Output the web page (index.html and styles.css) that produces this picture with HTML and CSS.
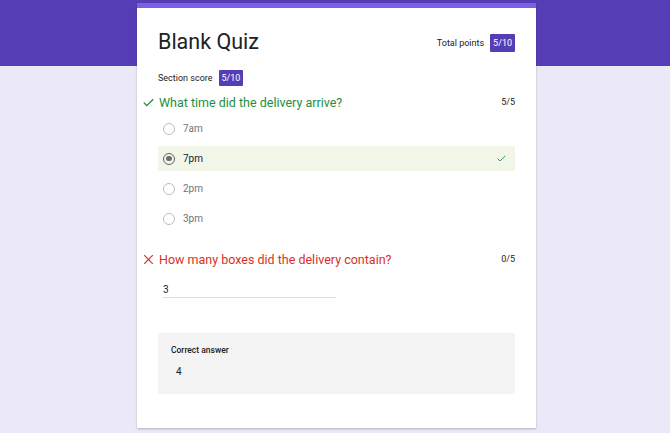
FILE: index.html
```html
<!DOCTYPE html>
<html>
<head>
<meta charset="utf-8">
<link rel="stylesheet" href="styles.css">
</head>
<body>
<div class="band"></div>
<div class="page">
  <div class="card">
    <div class="stripe"></div>
    <div class="inner">
      <div class="head">
        <h1 class="title">Blank Quiz</h1>
        <div class="total">Total points <span class="badge big">5/10</span></div>
      </div>
      <div class="section">Section score <span class="badge">5/10</span></div>

      <div class="q">
        <div class="qhead">
          <svg class="mark" width="11" height="9" viewBox="0 0 11 9"><path d="M0.8 4.6 L3.8 7.6 L10.2 1.2" fill="none" stroke="#1e8e3e" stroke-width="1.3"/></svg>
          <span class="qtext ok">What time did the delivery arrive?</span>
          <span class="pts">5/5</span>
        </div>
        <div class="opts">
          <div class="opt"><span class="radio"></span><span class="otext">7am</span></div>
          <div class="opt sel"><span class="radio on"></span><span class="otext">7pm</span>
            <svg class="okmark" width="9" height="7" viewBox="0 0 9 7"><path d="M0.7 3.6 L3.1 6 L8.3 0.8" fill="none" stroke="#1e8e3e" stroke-width="0.9"/></svg>
          </div>
          <div class="opt"><span class="radio"></span><span class="otext">2pm</span></div>
          <div class="opt"><span class="radio"></span><span class="otext">3pm</span></div>
        </div>
      </div>

      <div class="q q2">
        <div class="qhead">
          <svg class="mark" width="11" height="11" viewBox="0 0 11 11"><path d="M1.2 1.2 L9.8 9.8 M9.8 1.2 L1.2 9.8" fill="none" stroke="#d93025" stroke-width="1.2"/></svg>
          <span class="qtext bad">How many boxes did the delivery contain?</span>
          <span class="pts">0/5</span>
        </div>
        <div class="answer">3</div>
        <div class="correct">
          <div class="clabel">Correct answer</div>
          <div class="cval">4</div>
        </div>
      </div>
    </div>
  </div>
</div>
</body>
</html>
```
FILE: styles.css
```css
html, body { margin: 0; padding: 0; }
body {
  background: #ebe9f7;
  font-family: Roboto, "Liberation Sans", Arial, sans-serif;
  color: #202124;
  height: 433px;
  overflow: hidden;
  position: relative;
}
.band {
  height: 66px;
  background: #553eb5;
}
.page {
  position: absolute;
  top: 3px;
  left: 0;
  right: 0;
  display: flex;
  justify-content: center;
  padding-left: 3px;
}
.card {
  width: 399px;
  height: 425px;
  background: #fff;
  box-shadow: 0 1px 2px rgba(0,0,0,0.25);
}
.stripe {
  height: 5px;
  background: #7d5fe6;
}
.inner {
  padding: 0 21px 0 21px;
}
.head {
  display: flex;
  justify-content: space-between;
  align-items: center;
  padding-top: 20px;
  height: 28px;
}
.title {
  margin: 0;
  font-size: 21.5px;
  font-weight: 400;
  line-height: 28px;
  color: #202124;
}
.total {
  font-size: 9px;
  display: flex;
  align-items: center;
  gap: 6px;
  margin-top: 1px;
}
.badge {
  display: inline-block;
  background: #553eb5;
  color: #fff;
  font-size: 9px;
  padding: 0 3px;
  height: 16px;
  line-height: 16px;
  border-radius: 1px;
  text-align: center;
  min-width: 17px;
}
.badge.big {
  height: 18px;
  line-height: 18px;
  min-width: 18px;
}
.section {
  margin-top: 14px;
  font-size: 9px;
  display: flex;
  align-items: center;
  gap: 6px;
}
.q { margin-top: 7px; }
.qhead {
  display: flex;
  align-items: center;
  height: 18px;
  margin-left: -15px;
}
.mark { margin-right: 5px; }
.qtext {
  font-size: 12.5px;
  flex: 1;
}
.ok { color: #1e8e3e; }
.bad { color: #d93025; }
.pts {
  font-size: 9px;
  color: #202124;
}
.opts { margin-top: 5px; }
.opt {
  display: flex;
  align-items: center;
  height: 25px;
  margin-bottom: 5px;
  padding-left: 5px;
  position: relative;
}
.opt.sel { background: #f1f6e8; }
.radio {
  width: 10px;
  height: 10px;
  border: 1.2px solid #bdbdbd;
  border-radius: 50%;
  margin-right: 8px;
  position: relative;
}
.radio.on { border-color: #5f6368; }
.radio.on::after {
  content: "";
  position: absolute;
  left: 2.2px;
  top: 2.2px;
  width: 5.6px;
  height: 5.6px;
  border-radius: 50%;
  background: #6b6e72;
}
.otext {
  font-size: 10px;
  color: #70757a;
}
.sel .otext { color: #202124; }
.okmark { margin-left: auto; margin-right: 9px; }
.q2 { margin-top: 19px; }
.answer {
  margin-left: 5px;
  margin-top: 15px;
  width: 173px;
  font-size: 10px;
  padding-bottom: 1px;
  border-bottom: 1px solid #dadce0;
  height: 13px;
  line-height: 13px;
}
.correct {
  margin-top: 35px;
  background: #f4f4f4;
  height: 61px;
  padding: 12px 13px 0 13px;
  box-sizing: border-box;
}
.clabel {
  font-size: 8.5px;
  font-weight: 500;
}
.cval {
  margin-top: 11px;
  margin-left: 5px;
  font-size: 10px;
}
```
